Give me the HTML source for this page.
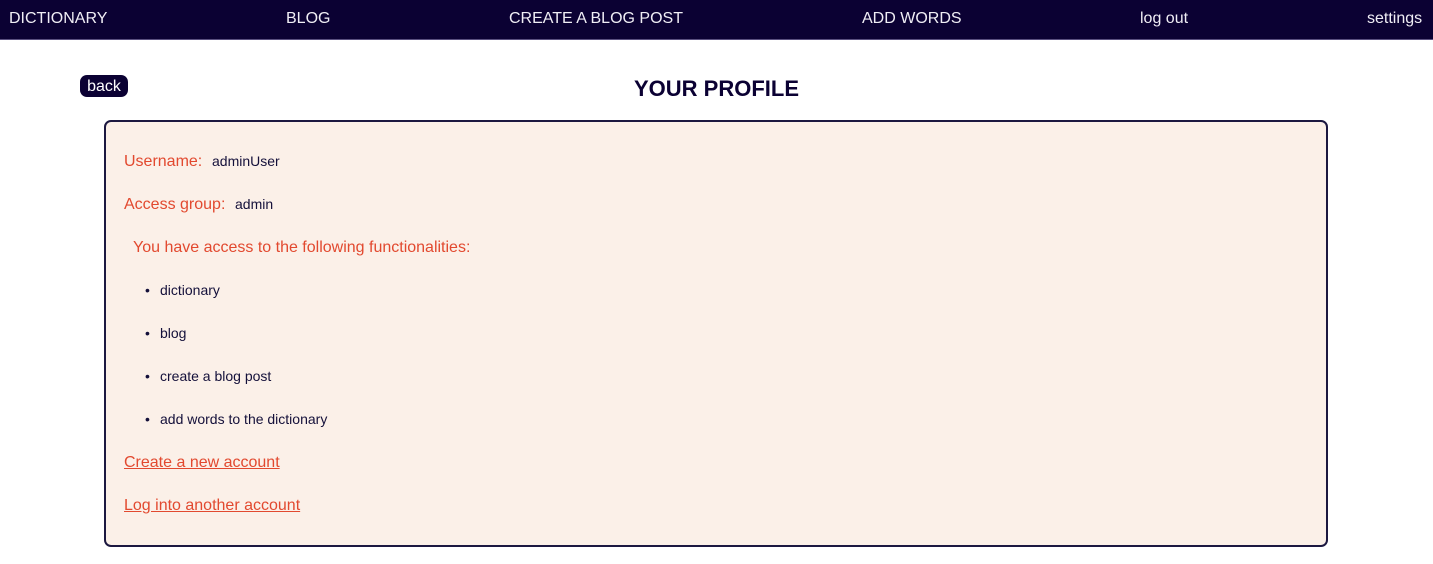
<!DOCTYPE html>
<html><head><style>
body{margin:0;width:1433px;height:564px;background:#fff;font-family:"Liberation Sans",sans-serif;position:relative;overflow:hidden}
.nav{position:absolute;left:0;top:0;width:1433px;height:39px;background:#0b0133;border-bottom:1px solid #5a5080}
.nav span{position:absolute;top:9px;color:#f0eef5;font-size:16px}
.t{position:absolute;white-space:nowrap}
.r{color:#e2492f;font-size:16px}
.d{color:#14103a;font-size:14px}
a{color:#e2492f;text-decoration:underline}
.li{position:absolute;left:145px;color:#14103a;font-size:14px}
</style></head><body>
<div class="nav">
<span style="left:9px;top:10px">DICTIONARY</span>
<span style="left:286px;top:10px">BLOG</span>
<span style="left:509px;top:10px">CREATE A BLOG POST</span>
<span style="left:862px;top:10px">ADD WORDS</span>
<span style="left:1140px;top:10px">log out</span>
<span style="left:1367px;top:10px">settings</span>
</div>
<div class="t" style="left:80px;top:75px;width:48px;height:22px;background:#0b0133;border-radius:7px;color:#fff;font-size:16px;line-height:23px;text-align:center">back</div>
<div class="t" style="left:0;width:1433px;top:76px;text-align:center;font-size:22px;font-weight:bold;color:#0b0133">YOUR PROFILE</div>
<div style="position:absolute;left:104px;top:120px;width:1220px;height:423px;border:2px solid #1c1840;border-radius:7px;background:#fbf0e8"></div>
<div class="t r" style="left:124px;top:153px">Username:</div><div class="t d" style="left:212px;top:153px">adminUser</div>
<div class="t r" style="left:124px;top:196px">Access group:</div><div class="t d" style="left:235px;top:196px">admin</div>
<div class="t r" style="left:133px;top:239px">You have access to the following functionalities:</div>
<div class="t li" style="top:282px">•</div><div class="t d" style="left:160px;top:282px">dictionary</div>
<div class="t li" style="top:325px">•</div><div class="t d" style="left:160px;top:325px">blog</div>
<div class="t li" style="top:368px">•</div><div class="t d" style="left:160px;top:368px">create a blog post</div>
<div class="t li" style="top:411px">•</div><div class="t d" style="left:160px;top:411px">add words to the dictionary</div>
<div class="t r" style="left:124px;top:454px"><a>Create a new account</a></div>
<div class="t r" style="left:124px;top:497px"><a>Log into another account</a></div>
</body></html>
